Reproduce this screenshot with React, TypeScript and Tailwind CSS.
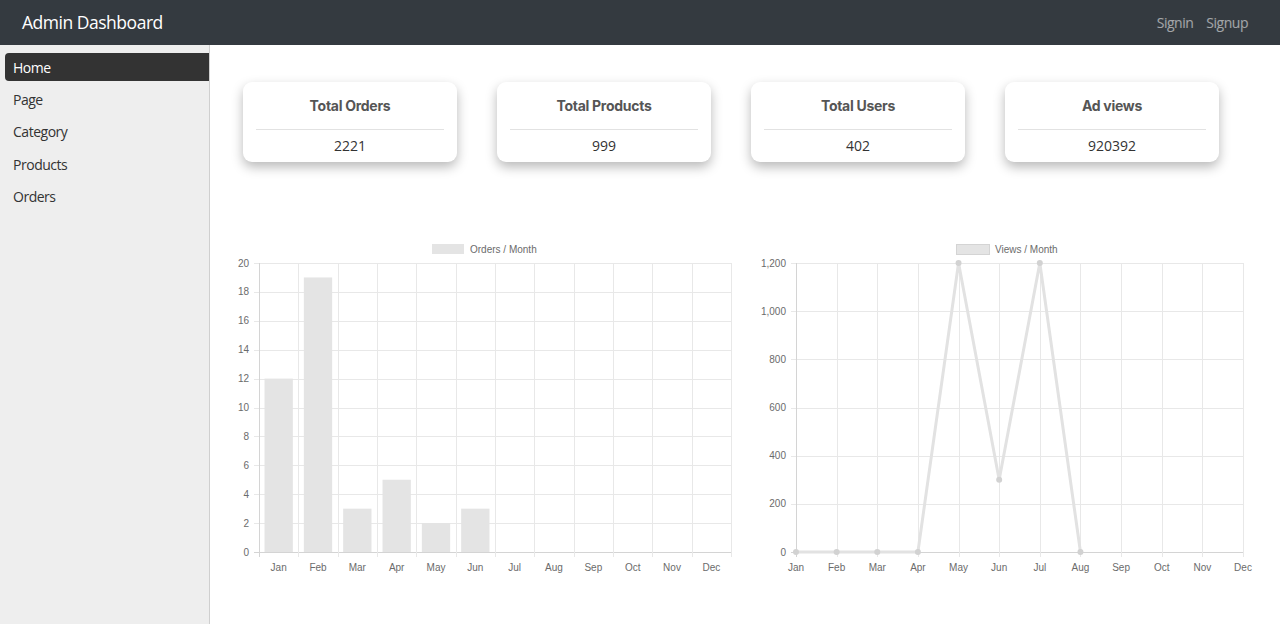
import React from 'react';

const months = ['Jan', 'Feb', 'Mar', 'Apr', 'May', 'Jun', 'Jul', 'Aug', 'Sep', 'Oct', 'Nov', 'Dec'];
const orders = [12, 19, 3, 5, 2, 3];
const views = [0, 0, 0, 0, 1200, 300, 1200, 0];

const stats = [
	{ title: 'Total Orders', value: '2221' },
	{ title: 'Total Products', value: '999' },
	{ title: 'Total Users', value: '402' },
	{ title: 'Ad views', value: '920392' },
];

const menu = ['Home', 'Page', 'Category', 'Products', 'Orders'];

const GRID = '#e8e8e8';
const AXIS = '#d4d4d4';
const FILL = '#e4e4e4';
const LABEL = '#6b6b6b';
const chartFont = '"Liberation Sans", Arial, sans-serif';

function BarChart() {
	const left = 31;
	const right = 503;
	const top = 25;
	const bottom = 314;
	const cw = (right - left) / 12;
	const y = (v: number) => bottom - (v / 20) * (bottom - top);
	const ticks = [0, 2, 4, 6, 8, 10, 12, 14, 16, 18, 20];
	return (
		<svg width="512" height="340" fontFamily={chartFont} fontSize="10">
			<rect x="204" y="6" width="32" height="10" fill={FILL} />
			<text x="242" y="14.5" fill={LABEL}>
				Orders / Month
			</text>
			{ticks.map((t) => (
				<g key={t}>
					<line x1={left - 5} x2={right} y1={Math.round(y(t)) + 0.5} y2={Math.round(y(t)) + 0.5} stroke={t === 0 ? AXIS : GRID} />
					<text x={left - 10} y={y(t) + 3.5} textAnchor="end" fill={LABEL}>
						{t}
					</text>
				</g>
			))}
			{Array.from({ length: 13 }).map((_, i) => (
				<line
					key={i}
					x1={Math.round(left + i * cw) + 0.5}
					x2={Math.round(left + i * cw) + 0.5}
					y1={top}
					y2={bottom + 5}
					stroke={i === 0 ? AXIS : GRID}
				/>
			))}
			{orders.map((v, i) => {
				const bw = cw * 0.72;
				const cx = left + cw * (i + 0.5);
				return <rect key={i} x={cx - bw / 2} y={y(v)} width={bw} height={bottom - y(v)} fill={FILL} />;
			})}
			{months.map((m, i) => (
				<text key={m} x={left + cw * (i + 0.5)} y={333} textAnchor="middle" fill={LABEL}>
					{m}
				</text>
			))}
		</svg>
	);
}

function LineChart() {
	const left = 52;
	const right = 499;
	const top = 25;
	const bottom = 314;
	const step = (right - left) / 11;
	const y = (v: number) => bottom - (v / 1200) * (bottom - top);
	const ticks = [0, 200, 400, 600, 800, 1000, 1200];
	const pts = views.map((v, i) => `${left + i * step},${y(v)}`).join(' ');
	return (
		<svg width="512" height="340" fontFamily={chartFont} fontSize="10">
			<rect x="212.5" y="6.5" width="33" height="10" fill={FILL} stroke={AXIS} />
			<text x="251" y="14.5" fill={LABEL}>
				Views / Month
			</text>
			{ticks.map((t) => (
				<g key={t}>
					<line x1={left - 5} x2={right} y1={Math.round(y(t)) + 0.5} y2={Math.round(y(t)) + 0.5} stroke={t === 0 ? AXIS : GRID} />
					<text x={left - 10} y={y(t) + 3.5} textAnchor="end" fill={LABEL}>
						{t.toLocaleString('en-US')}
					</text>
				</g>
			))}
			{months.map((m, i) => (
				<g key={m}>
					<line
						x1={Math.round(left + i * step) + 0.5}
						x2={Math.round(left + i * step) + 0.5}
						y1={top}
						y2={bottom + 5}
						stroke={i === 0 ? AXIS : GRID}
					/>
					<text x={left + i * step} y={333} textAnchor="middle" fill={LABEL}>
						{m}
					</text>
				</g>
			))}
			<polyline points={pts} fill="none" stroke="#e2e2e2" strokeWidth="3" strokeLinejoin="miter" />
			{views.map((v, i) => (
				<circle key={i} cx={left + i * step} cy={y(v)} r="3" fill="#d2d2d2" />
			))}
		</svg>
	);
}

export default function App() {
	return (
		<div className="flex h-screen flex-col bg-white font-['Open_Sans',sans-serif] tracking-[-0.03em]">
			<header className="flex h-[45px] shrink-0 items-center justify-between bg-[#343a40] pl-[22px] pr-[32px]">
				<div className="text-[17.5px] text-white">Admin Dashboard</div>
				<div className="flex gap-[13px] text-[14px] text-white/55">
					<span>Signin</span>
					<span>Signup</span>
				</div>
			</header>
			<div className="flex flex-1">
				<aside className="w-[210px] shrink-0 border-r border-[#cfcfcf] bg-[#eeeeee] pl-[5px] pt-[8px]">
					<ul className="flex flex-col gap-[4.4px]">
						{menu.map((m, i) => (
							<li
								key={m}
								className={
									i === 0
										? 'flex h-[28px] items-center rounded-l-[4px] bg-[#333] pl-[8px] text-[14px] text-white'
										: 'flex h-[28px] items-center pl-[8px] text-[14px] text-[#333]'
								}
							>
								{m}
							</li>
						))}
					</ul>
				</aside>
				<main className="flex-1">
					<div className="flex gap-[40px] pl-[33px] pt-[37px]">
						{stats.map((s) => (
							<div
								key={s.title}
								className="flex h-[80px] w-[214px] flex-col rounded-[9px] bg-white px-[13px] shadow-[0_5px_12px_rgba(0,0,0,0.28)]"
							>
								<div className="flex h-[48px] items-center justify-center border-b border-[#e2e2e2] pb-[1px] font-['Inter',sans-serif] text-[14px] font-bold tracking-[-0.02em] text-[#555]">
									{s.title}
								</div>
								<div className="flex flex-1 items-center justify-center pb-[2px] text-[14px] tracking-normal text-[#333]">
									{s.value}
								</div>
							</div>
						))}
					</div>
					<div className="flex gap-[4px] pl-[18px] pt-[76px] tracking-normal">
						<BarChart />
						<LineChart />
					</div>
				</main>
			</div>
		</div>
	);
}
